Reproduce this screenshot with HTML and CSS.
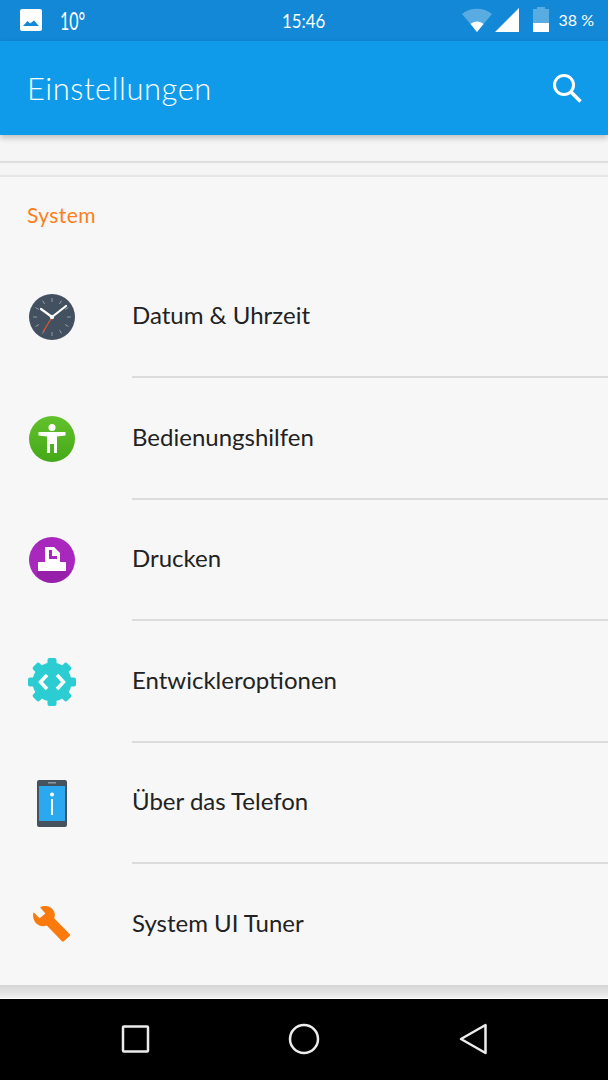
FILE: index.html
```html
<!DOCTYPE html>
<html lang="de">
<head>
  <meta charset="UTF-8" />
  <meta name="viewport" content="width=device-width, initial-scale=1.0"/>
  <title>Einstellungen</title>
  <link rel="stylesheet" href="styles.css">
</head>
<body>
  <div class="phone">
    <div class="statusbar">
      <div class="status-left">
        <svg class="pic-icon" width="22" height="22" viewBox="0 0 22 22">
          <rect width="22" height="22" rx="2" fill="#fff"/>
          <path d="M3 17 L7.500 12 L10 14.500 L14 11.500 L19 17 Z" fill="#1288d6"/>
        </svg>
        <span class="temp">10°</span>
      </div>
      <div class="clock">15:46</div>
      <div class="status-right">
        <svg class="wifi" width="30" height="24" viewBox="0 0 30 24">
          <path d="M0 6 C8 -1 22 -1 30 6 L15 24 Z" fill="#fff" fill-opacity="0.3"/>
          <path d="M8.500 16 C12 12.500 18 12.500 21.500 16 L15 24 Z" fill="#fff"/>
        </svg>
        <svg class="signal" width="24" height="24" viewBox="0 0 24 24">
          <path d="M0 24 L24 0 L24 24 Z" fill="#fff"/>
        </svg>
        <svg class="battery" width="16" height="25" viewBox="0 0 16 25">
          <path d="M4 2 L4 0 L12 0 L12 2 L16 2 L16 25 L0 25 L0 2 Z" fill="#fff" fill-opacity="0.3"/>
          <rect y="16" width="16" height="9" fill="#fff"/>
        </svg>
        <span class="percent">38 %</span>
      </div>
    </div>

    <header class="appbar">
      <h1>Einstellungen</h1>
      <svg class="search" width="32" height="32" viewBox="0 0 32 32">
        <circle cx="13" cy="13" r="9.500" fill="none" stroke="#fff" stroke-width="3"/>
        <path d="M20 20 L29.500 29.500" stroke="#fff" stroke-width="3.500"/>
      </svg>
    </header>

    <div class="spacer"></div>

    <section class="card">
      <h2>System</h2>

      <div class="row">
        <div class="row-icon">
          <svg width="48" height="48" viewBox="0 0 48 48">
            <circle cx="24" cy="24" r="23" fill="#43505f"/>
            <g stroke="#8f9aa5" stroke-width="1">
              <path d="M24 5 V9 M24 39 V43 M5 24 H9 M39 24 H43 M14.500 7.500 L16.500 11 M33.500 7.500 L31.500 11 M14.500 40.500 L16.500 37 M33.500 40.500 L31.500 37 M7.500 14.500 L11 16.500 M40.500 14.500 L37 16.500 M7.500 33.500 L11 31.500 M40.500 33.500 L37 31.500"/>
            </g>
            <path d="M24 24 L13 16 M24 24 L38 13" stroke="#fff" stroke-width="2.200" stroke-linecap="round"/>
            <path d="M24 24 L15 39" stroke="#e2592c" stroke-width="1.200"/>
            <circle cx="24" cy="24" r="2.200" fill="#fff"/>
          </svg>
        </div>
        <div class="row-label">Datum &amp; Uhrzeit</div>
      </div>

      <div class="row">
        <div class="row-icon">
          <svg width="48" height="48" viewBox="0 0 48 48">
            <defs>
              <linearGradient id="greenFill" x1="0" y1="0" x2="0" y2="1">
                <stop offset="0" stop-color="#62c22c"/>
                <stop offset="1" stop-color="#44a818"/>
              </linearGradient>
            </defs>
            <circle cx="24" cy="24" r="23" fill="url(#greenFill)"/>
            <circle cx="24" cy="12.500" r="3.500" fill="#fff"/>
            <path d="M10.500 17 H37.500 V20.500 L29 21.500 V38 H26 V29 H22 V38 H19 V21.500 L10.500 20.500 Z" fill="#fff"/>
          </svg>
        </div>
        <div class="row-label">Bedienungshilfen</div>
      </div>

      <div class="row">
        <div class="row-icon">
          <svg width="48" height="48" viewBox="0 0 48 48">
            <circle cx="24" cy="24" r="23" fill="#a827bd"/>
            <path d="M10 35 H38 L43 35 Q36 47 24 47 Q14 47 8 38 Z" fill="#8f1ea3" fill-opacity="0.7"/>
            <path d="M17 11 H26 L32 17 V26 H17 Z" fill="#fff"/>
            <path d="M21 14 H24 V20 H29 V23 H21 Z" fill="#a827bd"/>
            <rect x="10" y="26" width="28" height="9" fill="#fff"/>
          </svg>
        </div>
        <div class="row-label">Drucken</div>
      </div>

      <div class="row">
        <div class="row-icon">
          <svg width="48" height="48" viewBox="0 0 48 48">
            <circle cx="24" cy="24" r="19.500" fill="#2bcdd2"/>
            <g fill="#2bcdd2">
              <rect x="19.500" y="0" width="9" height="8" rx="2"/>
              <rect x="19.500" y="0" width="9" height="8" rx="2" transform="rotate(45 24 24)"/>
              <rect x="19.500" y="0" width="9" height="8" rx="2" transform="rotate(90 24 24)"/>
              <rect x="19.500" y="0" width="9" height="8" rx="2" transform="rotate(135 24 24)"/>
              <rect x="19.500" y="0" width="9" height="8" rx="2" transform="rotate(180 24 24)"/>
              <rect x="19.500" y="0" width="9" height="8" rx="2" transform="rotate(225 24 24)"/>
              <rect x="19.500" y="0" width="9" height="8" rx="2" transform="rotate(270 24 24)"/>
              <rect x="19.500" y="0" width="9" height="8" rx="2" transform="rotate(315 24 24)"/>
            </g>
            <path d="M19 17 L12.500 24 L19 31 M29 17 L35.500 24 L29 31" fill="none" stroke="#fff" stroke-width="3.500"/>
          </svg>
        </div>
        <div class="row-label">Entwickleroptionen</div>
      </div>

      <div class="row">
        <div class="row-icon">
          <svg width="30" height="47" viewBox="0 0 30 47">
            <rect width="30" height="47" rx="2" fill="#46535f"/>
            <rect x="11" y="2" width="8" height="1.500" fill="#8e98a1"/>
            <rect x="2" y="6" width="26" height="35" fill="#2aa9f0"/>
            <circle cx="15" cy="14.500" r="2" fill="#fff"/>
            <rect x="14" y="19" width="2" height="16" fill="#fff"/>
          </svg>
        </div>
        <div class="row-label">Über das Telefon</div>
      </div>

      <div class="row">
        <div class="row-icon">
          <svg width="38" height="38" viewBox="0 0 40 40">
            <path d="M12 0 C18 -0.500 23 4 23 9.500 C23 11 22.700 12 22.300 13 L38.500 29.500 Q39.500 30.500 38.500 31.500 L32.500 37 Q31.500 38 30.500 37 L14.500 20.500 C8 23 0.500 19 0 10 C0 8.500 0.300 7.500 0.700 6.500 L7 13 L13 8 L7.500 1.500 C9 0.500 10.500 0 12 0 Z" fill="#fb7a0e"/>
          </svg>
        </div>
        <div class="row-label">System UI Tuner</div>
      </div>
    </section>

    <div class="card-gap"></div>

    <nav class="navbar">
      <svg width="30" height="30" viewBox="0 0 30 30">
        <rect x="3" y="2.500" width="25" height="25" rx="1" fill="none" stroke="#ececec" stroke-width="2.500"/>
      </svg>
      <svg width="32" height="32" viewBox="0 0 32 32">
        <circle cx="16" cy="16" r="14" fill="none" stroke="#ececec" stroke-width="2.500"/>
      </svg>
      <svg width="30" height="32" viewBox="0 0 30 32">
        <path d="M27.500 2 V30 L3 16 Z" fill="none" stroke="#ececec" stroke-width="2.500" stroke-linejoin="round"/>
      </svg>
    </nav>
  </div>
</body>
</html>
```

FILE: styles.css
```css
* {
  box-sizing: border-box;
}
body {
  margin: 0;
  background: #f5f5f5;
  font-family: 'Lato', 'Liberation Sans', sans-serif;
}
.phone {
  width: 608px;
  height: 1080px;
  display: flex;
  flex-direction: column;
  overflow: hidden;
}
.statusbar {
  height: 41px;
  background: #1288d6;
  color: #fff;
  display: grid;
  grid-template-columns: 1fr auto 1fr;
  align-items: center;
  padding: 0 14px 2px 14px;
}
.status-left {
  display: flex;
  align-items: center;
  gap: 18px;
  padding-left: 6px;
}
.pic-icon {
  display: block;
}
.temp {
  display: inline-block;
  font-size: 25px;
  transform: scaleX(0.64);
  transform-origin: left center;
}
.clock {
  font-size: 20px;
  transform: scaleX(0.84);
}
.status-right {
  display: flex;
  align-items: center;
  justify-content: flex-end;
}
.wifi {
  margin-right: 3px;
}
.signal {
  margin-right: 14px;
}
.battery {
  margin-right: 10px;
}
.percent {
  font-size: 16px;
}
.appbar {
  height: 94px;
  background: #109bea;
  color: #fff;
  display: flex;
  align-items: center;
  justify-content: space-between;
  padding: 0 25px 0 27px;
  box-shadow: 0 3px 6px rgba(0, 0, 0, 0.22);
  position: relative;
}
.appbar h1 {
  margin: 0;
  font-size: 31px;
  font-weight: 300;
  letter-spacing: 0.5px;
}
.spacer {
  height: 28px;
  border-bottom: 2px solid #dfdfdf;
}
.card {
  margin-top: 12px;
  height: 810px;
  background: #f7f7f7;
  border-top: 2px solid #e6e6e6;
  box-shadow: 0 2px 3px rgba(0, 0, 0, 0.2);
}
.card h2 {
  margin: 0;
  height: 78.500px;
  padding: 24px 0 0 27px;
  font-size: 21px;
  line-height: 28px;
  font-weight: 400;
  letter-spacing: 0.4px;
  color: #fb7f1c;
}
.row {
  height: 121.500px;
  display: flex;
  align-items: center;
  position: relative;
}
.row + .row::before {
  content: "";
  position: absolute;
  top: -1px;
  left: 132px;
  right: 0;
  height: 2px;
  background: #dcdcdc;
}
.row-icon {
  width: 132px;
  padding: 2px 28px 0 0;
  display: flex;
  justify-content: center;
}
.row-icon svg {
  display: block;
}
.row-label {
  font-size: 24px;
  color: #222;
  padding-bottom: 3px;
}
.card-gap {
  height: 14px;
  background: linear-gradient(#d4d4d4, #f0f0f0);
  border-bottom: 1px solid #fff;
}
.navbar {
  flex: 1;
  background: #000;
  display: grid;
  grid-template-columns: repeat(3, 169px);
  justify-content: center;
  justify-items: center;
  align-items: center;
  padding-bottom: 2px;
}
```
